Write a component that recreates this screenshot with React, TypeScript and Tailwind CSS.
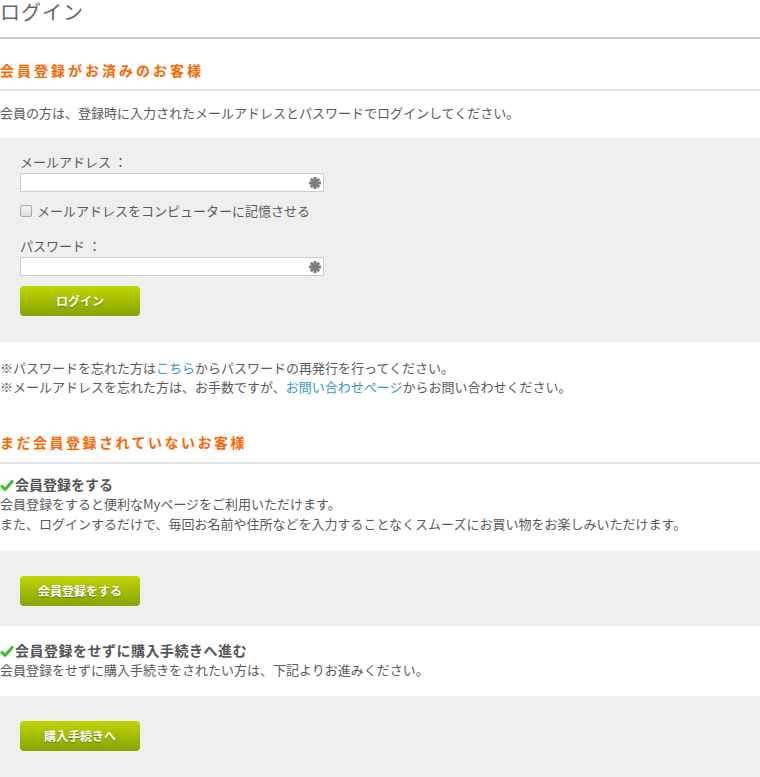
import React from "react";

const font = "font-['Noto_Sans_CJK_JP','Noto_Sans_CJK_SC',sans-serif]";

const Asterisk = () => (
  <svg width="12" height="12" viewBox="0 0 12 12" className="absolute right-[2px] top-[3px]">
    <g stroke="#7e7e7e" strokeWidth="3" strokeLinecap="butt">
      <line x1="6" y1="0" x2="6" y2="12" />
      <line x1="0" y1="6" x2="12" y2="6" />
      <line x1="1.8" y1="1.8" x2="10.2" y2="10.2" />
      <line x1="10.2" y1="1.8" x2="1.8" y2="10.2" />
    </g>
  </svg>
);

const Field = () => (
  <div className="relative w-[304px] h-[19px] bg-white border border-[#cccccc]">
    <Asterisk />
  </div>
);

const GreenButton = ({ label }: { label: string }) => (
  <button
    type="button"
    className="block w-[120px] h-[30px] rounded-[4px] bg-gradient-to-b from-[#c2d603] to-[#86a300] text-white text-[12px] font-bold [text-shadow:0_1px_1px_rgba(0,0,0,0.35)]"
  >
    {label}
  </button>
);

const Check = () => (
  <svg width="14" height="12" viewBox="0 0 14 12" className="inline-block mr-[1px] -mt-[2px] align-middle">
    <path d="M1 6.5 L5 10.5 L13 1.5" fill="none" stroke="#3fbf2a" strokeWidth="3" strokeLinejoin="round" />
  </svg>
);

const App: React.FC = () => {
  return (
    <div className={`${font} w-[760px] min-h-[777px] bg-white text-[#5a5a5a] text-[13px] overflow-hidden`}>
      {/* page title */}
      <div className="h-[39px] pt-[1px] border-b-2 border-[#cccccc]">
        <h1 className="text-[20px] leading-[22px] text-[#666] tracking-[1px]">ログイン</h1>
      </div>

      {/* member login */}
      <div className="pt-[22px] pb-[10px] border-b-2 border-[#e2e2e2]">
        <h2 className="text-[14px] leading-[18px] font-bold text-[#ff6600] tracking-[3px]">
          会員登録がお済みのお客様
        </h2>
      </div>
      <p className="pt-[13px] leading-[18px]">
        会員の方は、登録時に入力されたメールアドレスとパスワードでログインしてください。
      </p>

      <div className="mt-[16px] bg-[#efefef] px-[20px] pt-[16px] pb-[26px]">
        <div className="leading-[16px]">メールアドレス ：</div>
        <div className="mt-[3px]">
          <Field />
        </div>
        <div className="mt-[11px] flex items-center gap-[5px] leading-[16px]">
          <span className="w-[12px] h-[12px] rounded-[2px] border border-[#a9a9a9] bg-gradient-to-b from-[#f4f4f4] to-[#dcdcdc]" />
          <span>メールアドレスをコンピューターに記憶させる</span>
        </div>
        <div className="mt-[19px] leading-[16px]">パスワード ：</div>
        <div className="mt-[3px]">
          <Field />
        </div>
        <div className="mt-[10px]">
          <GreenButton label="ログイン" />
        </div>
      </div>

      <div className="pt-[16px] leading-[19px]">
        <p>
          ※パスワードを忘れた方は<a className="text-[#3399cc]">こちら</a>からパスワードの再発行を行ってください。
        </p>
        <p>
          ※メールアドレスを忘れた方は、お手数ですが、<a className="text-[#3399cc]">お問い合わせページ</a>からお問い合わせください。
        </p>
      </div>

      {/* not a member */}
      <div className="mt-[37px] pb-[11px] border-b-2 border-[#e2e2e2]">
        <h2 className="text-[14px] leading-[18px] font-bold text-[#ff6600] tracking-[2.5px]">
          まだ会員登録されていないお客様
        </h2>
      </div>

      <div className="pt-[11px]">
        <h3 className="text-[14px] leading-[18px] font-bold text-[#555]">
          <Check />
          会員登録をする
        </h3>
        <div className="mt-[1px] leading-[20px]">
          <p>会員登録をすると便利なMyページをご利用いただけます。</p>
          <p>また、ログインするだけで、毎回お名前や住所などを入力することなくスムーズにお買い物をお楽しみいただけます。</p>
        </div>
      </div>
      <div className="mt-[17px] bg-[#efefef] px-[20px] pt-[25px] pb-[20px]">
        <GreenButton label="会員登録をする" />
      </div>

      <div className="pt-[15px]">
        <h3 className="text-[14px] leading-[18px] font-bold text-[#555] tracking-[0.5px]">
          <Check />
          会員登録をせずに購入手続きへ進む
        </h3>
        <p className="mt-[1px] leading-[20px]">
          会員登録をせずに購入手続きをされたい方は、下記よりお進みください。
        </p>
      </div>
      <div className="mt-[16px] bg-[#efefef] px-[20px] pt-[25px] pb-[30px]">
        <GreenButton label="購入手続きへ" />
      </div>
    </div>
  );
};

export default App;
